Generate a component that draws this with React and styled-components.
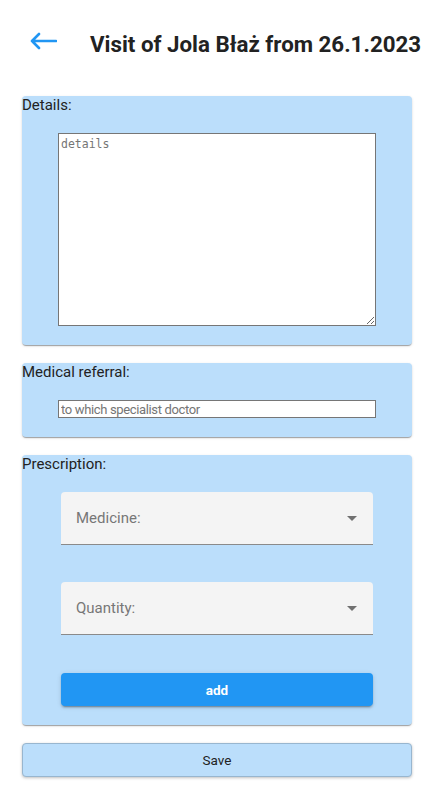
import React from "react";
import styled, { createGlobalStyle } from "styled-components";

const Global = createGlobalStyle`
  html, body { margin: 0; padding: 0; background: #fff; }
  body { font-family: Roboto, "Noto Sans", Arial, sans-serif; color: #222; }
  * { box-sizing: border-box; }
`;

const Page = styled.div`
  width: 434px;
  padding: 0 22px 14px 22px;
`;

const Header = styled.header`
  display: flex;
  align-items: center;
  height: 96px;
  padding-left: 7px;
`;

const BackButton = styled.button`
  display: flex;
  align-items: center;
  background: none;
  border: 0;
  padding: 0;
  margin: -14px 33px 0 0;
  cursor: pointer;
  height: 20px;
`;

const Title = styled.h1`
  margin: -8px 0 0 0;
  font-family: Roboto, sans-serif;
  font-weight: 700;
  font-size: 22.3px;
  color: #222;
  white-space: nowrap;
`;

const Card = styled.section`
  background: #bbdefb;
  border-radius: 4px;
  box-shadow: 0 2px 1px -1px rgba(0,0,0,.2), 0 1px 1px 0 rgba(0,0,0,.14), 0 1px 3px 0 rgba(0,0,0,.12);
  display: flex;
  flex-direction: column;
  align-items: center;
  padding-bottom: 19px;
  margin-bottom: 18px;
`;

const CardLabel = styled.div`
  align-self: stretch;
  font-size: 15px;
  line-height: 19px;
  color: #222;
  margin-bottom: 18px;
`;

const TextArea = styled.textarea`
  display: block;
  width: 318px;
  height: 193px;
  border: 1px solid #767676;
  font-family: "DejaVu Sans Mono", "Liberation Mono", monospace;
  font-size: 11.5px;
  padding: 3px 2px;
  resize: vertical;
  background: #fff;
  &::placeholder { color: #757575; }
`;

const TextInput = styled.input`
  display: block;
  width: 318px;
  height: 18px;
  border: 1px solid #767676;
  font-family: Roboto, sans-serif;
  font-size: 13px;
  letter-spacing: -0.35px;
  padding: 1px 2px;
  background: #fff;
  &::placeholder { color: #757575; }
`;

const SelectBox = styled.div`
  width: 312px;
  height: 53px;
  background: #f4f4f4;
  border-radius: 4px 4px 0 0;
  border-bottom: 1px solid #8a8a8a;
  display: flex;
  align-items: center;
  justify-content: space-between;
  padding: 0 16px 0 15px;
  font-size: 15px;
  color: #777;
  margin-bottom: ${p => p.$after ?? 0}px;
`;

const Caret = styled.span`
  width: 0;
  height: 0;
  border-left: 5px solid transparent;
  border-right: 5px solid transparent;
  border-top: 5px solid #707070;
  margin-top: 1px;
`;

const AddButton = styled.button`
  width: 312px;
  height: 33px;
  border: 0;
  border-radius: 4px;
  background: #2196f3;
  color: #fff;
  font-family: Roboto, sans-serif;
  font-weight: 700;
  font-size: 13.5px;
  box-shadow: 0 3px 1px -2px rgba(0,0,0,.2), 0 2px 2px 0 rgba(0,0,0,.14), 0 1px 5px 0 rgba(0,0,0,.12);
  cursor: pointer;
`;

const SaveButton = styled.button`
  width: 390px;
  height: 34px;
  border: 1px solid #98b6cf;
  border-radius: 4px;
  background: #bbdefb;
  color: #222;
  font-family: Roboto, sans-serif;
  font-size: 13.5px;
  box-shadow: 0 1px 3px rgba(0,0,0,.25);
  cursor: pointer;
  display: block;
`;

const ArrowIcon = () => (
  <svg width="28" height="18" viewBox="0 0 28 18" fill="none">
    <path d="M27 9H3M10 2L3 9l7 7" stroke="#2196f3" strokeWidth="2.6" strokeLinecap="round" strokeLinejoin="round" />
  </svg>
);

export default function App() {
  return (
    <>
      <Global />
      <Page>
        <Header>
          <BackButton aria-label="back"><ArrowIcon /></BackButton>
          <Title>Visit of Jola Błaż from 26.1.2023</Title>
        </Header>

        <Card>
          <CardLabel>Details:</CardLabel>
          <TextArea placeholder="details" />
        </Card>

        <Card>
          <CardLabel>Medical referral:</CardLabel>
          <TextInput placeholder="to which specialist doctor" />
        </Card>

        <Card>
          <CardLabel>Prescription:</CardLabel>
          <SelectBox $after={37}>Medicine:<Caret /></SelectBox>
          <SelectBox $after={38}>Quantity:<Caret /></SelectBox>
          <AddButton>add</AddButton>
        </Card>

        <SaveButton>Save</SaveButton>
      </Page>
    </>
  );
}
